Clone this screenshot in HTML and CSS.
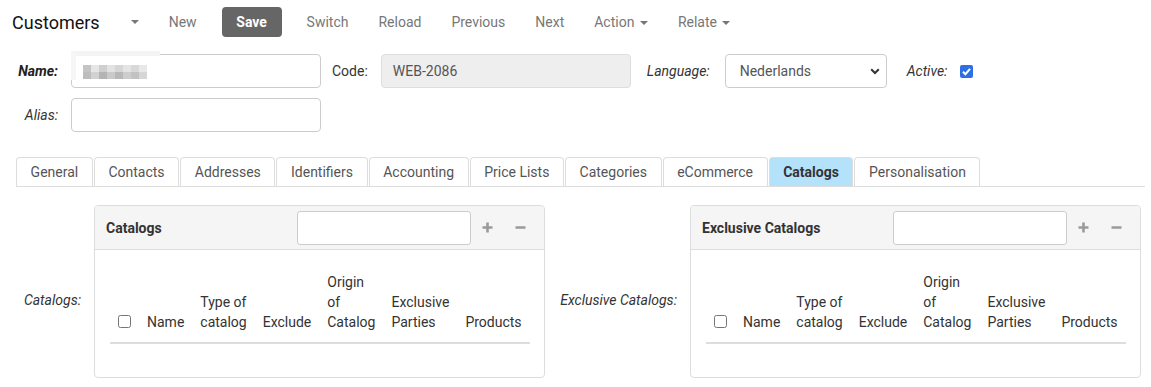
FILE: index.html
```html
<!DOCTYPE html>
<html>
<head>
<meta charset="utf-8">
<link rel="stylesheet" href="styles.css">
</head>
<body>
<div class="toolbar">
  <span class="brand">Customers</span>
  <span class="brand-toggle"><span class="caret"></span></span>
  <span class="nav-link">New</span>
  <span class="save">Save</span>
  <span class="nav-link">Switch</span>
  <span class="nav-link">Reload</span>
  <span class="nav-link">Previous</span>
  <span class="nav-link">Next</span>
  <span class="nav-link">Action <span class="caret"></span></span>
  <span class="nav-link">Relate <span class="caret"></span></span>
</div>

<div class="form">
  <div class="row">
    <label class="lbl lbl-first lbl-bold">Name:</label>
    <div class="name-wrap">
      <div class="input name-input">
        <span class="blur">
          <i class="b1"></i><i class="b2"></i><i class="b3"></i><i class="b4"></i><i class="b5"></i><i class="b6"></i><i class="b7"></i><i class="b8"></i>
        </span>
      </div>
    </div>
    <label class="lbl lbl-code">Code:</label>
    <div class="input code-input">WEB-2086</div>
    <label class="lbl lbl-lang lbl-it">Language:</label>
    <div class="select">
      <span>Nederlands</span>
      <svg class="chev" width="10" height="7" viewBox="0 0 10 7"><path d="M1.2 1.2 L5 5 L8.8 1.2" fill="none" stroke="#333" stroke-width="2"/></svg>
    </div>
    <label class="lbl lbl-active lbl-it">Active:</label>
    <svg class="check" width="13" height="13" viewBox="0 0 13 13"><rect x="0" y="0" width="13" height="13" rx="2" fill="#2f6fe6"/><path d="M3 6.8 L5.4 9.2 L10 3.8" fill="none" stroke="#fff" stroke-width="2"/></svg>
  </div>
  <div class="row">
    <label class="lbl lbl-first lbl-it">Alias:</label>
    <div class="input name-input"></div>
  </div>
</div>

<div class="tabs">
  <span class="tab">General</span>
  <span class="tab">Contacts</span>
  <span class="tab">Addresses</span>
  <span class="tab">Identifiers</span>
  <span class="tab">Accounting</span>
  <span class="tab">Price Lists</span>
  <span class="tab">Categories</span>
  <span class="tab">eCommerce</span>
  <span class="tab active">Catalogs</span>
  <span class="tab">Personalisation</span>
</div>

<div class="panels">
  <div class="pgroup">
    <label class="plabel plabel-1">Catalogs:</label>
    <div class="panel">
      <div class="phead">
        <span class="ptitle">Catalogs</span>
        <div class="psearch"></div>
        <span class="pbtn"><svg width="11" height="11" viewBox="0 0 11 11"><path d="M5.5 0.5 V10.5 M0.5 5.5 H10.5" stroke="#9a9a9a" stroke-width="2.6"/></svg></span>
        <span class="pbtn"><svg width="11" height="11" viewBox="0 0 11 11"><path d="M0.5 5.5 H10.5" stroke="#9a9a9a" stroke-width="2.6"/></svg></span>
      </div>
      <div class="pbody">
        <table class="grid">
          <thead>
            <tr>
              <th><input type="checkbox"></th>
              <th>Name</th>
              <th>Type of<br>catalog</th>
              <th>Exclude</th>
              <th>Origin<br>of<br>Catalog</th>
              <th>Exclusive<br>Parties</th>
              <th>Products</th>
            </tr>
          </thead>
        </table>
      </div>
    </div>
  </div>
  <div class="pgroup pgroup-2">
    <label class="plabel plabel-2">Exclusive Catalogs:</label>
    <div class="panel">
      <div class="phead">
        <span class="ptitle">Exclusive Catalogs</span>
        <div class="psearch"></div>
        <span class="pbtn"><svg width="11" height="11" viewBox="0 0 11 11"><path d="M5.5 0.5 V10.5 M0.5 5.5 H10.5" stroke="#9a9a9a" stroke-width="2.6"/></svg></span>
        <span class="pbtn"><svg width="11" height="11" viewBox="0 0 11 11"><path d="M0.5 5.5 H10.5" stroke="#9a9a9a" stroke-width="2.6"/></svg></span>
      </div>
      <div class="pbody">
        <table class="grid">
          <thead>
            <tr>
              <th><input type="checkbox"></th>
              <th>Name</th>
              <th>Type of<br>catalog</th>
              <th>Exclude</th>
              <th>Origin<br>of<br>Catalog</th>
              <th>Exclusive<br>Parties</th>
              <th>Products</th>
            </tr>
          </thead>
        </table>
      </div>
    </div>
  </div>
</div>
</body>
</html>
```

FILE: styles.css
```css
* { box-sizing: border-box; }
body {
  margin: 0;
  font-family: Roboto, "Liberation Sans", Arial, sans-serif;
  font-size: 14px;
  color: #333;
  background: #fff;
}

/* toolbar */
.toolbar {
  display: flex;
  align-items: center;
  height: 44px;
  padding-left: 12px;
}
.brand { font-size: 18px; color: #111; }
.brand-toggle { margin-left: 16px; padding: 0 15px; display: flex; align-items: center; }
.caret {
  display: inline-block;
  width: 0; height: 0;
  border-top: 4px solid #777;
  border-left: 4px solid transparent;
  border-right: 4px solid transparent;
  vertical-align: middle;
  margin-left: 2px;
}
.brand-toggle .caret { margin-left: 0; }
.nav-link { padding: 0 15px; color: #777; }
.save {
  margin: 0 10px;
  width: 60px;
  height: 30px;
  line-height: 30px;
  text-align: center;
  background: #666;
  color: #fff;
  font-weight: 700;
  border-radius: 4px;
}

/* form */
.form { margin-top: 10px; }
.row {
  display: flex;
  align-items: center;
  height: 34px;
  margin-bottom: 10px;
}
.lbl { color: #333; }
.lbl-it { font-style: italic; }
.lbl-bold { font-style: italic; font-weight: 700; color: #222; }
.lbl-first { width: 58px; text-align: right; margin-right: 13px; }
.lbl-code { margin-left: 11px; margin-right: 13px; }
.lbl-lang { margin-left: 16px; margin-right: 15px; }
.lbl-active { margin-left: 20px; margin-right: 13px; }
.input {
  height: 34px;
  border: 1px solid #ccc;
  border-radius: 4px;
  display: flex;
  align-items: center;
  padding: 0 11px;
  color: #555;
}
.name-wrap { position: relative; }
.name-wrap::before {
  content: "";
  position: absolute;
  left: 0; top: -3px;
  width: 89px; height: 5px;
  background: #f4f4f4;
}
.name-wrap::after {
  content: "";
  position: absolute;
  left: 0; top: -3px;
  width: 5px; height: 29px;
  background: #f6f6f6;
}
.name-input { width: 250px; }
.code-input { width: 250px; background: #eee; border-color: #ddd; }
.blur { display: flex; margin-left: 0; margin-top: 1px; }
.blur i { display: block; width: 8px; height: 14px; }
.b1 { background: linear-gradient(#c4c4c4 50%, #bdbdbd 50%); }
.b2 { background: linear-gradient(#e6e6e6 50%, #d2d2d2 50%); }
.b3 { background: linear-gradient(#cfcfcf 50%, #b4b4b4 50%); }
.b4 { background: linear-gradient(#e2e2e2 50%, #cacaca 50%); }
.b5 { background: linear-gradient(#d6d6d6 50%, #b8b8b8 50%); }
.b6 { background: linear-gradient(#e4e4e4 50%, #cdcdcd 50%); }
.b7 { background: linear-gradient(#d8d8d8 50%, #c2c2c2 50%); }
.b8 { background: linear-gradient(#e8e8e8 50%, #d6d6d6 50%); }
.select {
  width: 162px;
  height: 34px;
  border: 1px solid #ccc;
  border-radius: 4px;
  display: flex;
  align-items: center;
  justify-content: space-between;
  padding: 0 6px 0 14px;
  color: #555;
}
.chev { display: block; }
.check { display: block; }

/* tabs */
.tabs {
  display: flex;
  margin: 25px 6px 0 16px;
  border-bottom: 1px solid #ddd;
}
.tab {
  height: 29px;
  line-height: 28px;
  padding: 0 13.6px;
  border: 1px solid #ddd;
  border-bottom: none;
  border-radius: 4px 4px 0 0;
  margin-right: 1px;
  color: #555;
}
.tab.active {
  background: #b5e2fb;
  color: #333;
  font-weight: 700;
}

/* panels */
.panels {
  display: flex;
  margin-top: 18px;
}
.pgroup { display: flex; align-items: center; }
.pgroup-2 { margin-left: 11px; }
.plabel {
  font-style: italic;
  text-align: right;
  margin-right: 13px;
  padding-top: 16px;
}
.plabel-1 { width: 81px; }
.plabel-2 { width: 121px; }
.panel {
  width: 451px;
  height: 173px;
  border: 1px solid #ddd;
  border-radius: 4px;
  overflow: hidden;
}
.phead {
  height: 44px;
  background: #f5f5f5;
  border-bottom: 1px solid #ddd;
  display: flex;
  align-items: center;
  padding: 0 7px 0 11px;
}
.ptitle { flex: 1; font-weight: 700; color: #333; }
.psearch {
  width: 174px;
  height: 34px;
  background: #fff;
  border: 1px solid #ccc;
  border-radius: 3px;
}
.pbtn {
  width: 33px;
  display: flex;
  justify-content: center;
  align-items: center;
}
.pbtn svg { display: block; }
.pbody { padding: 14px 15px 0 15px; }
.grid { border-collapse: collapse; }
.grid th {
  font-weight: 400;
  text-align: left;
  vertical-align: bottom;
  line-height: 20px;
  padding: 8px 8px 10px 8px;
  border-bottom: 2px solid #ddd;
  white-space: nowrap;
  color: #333;
}
.grid input[type=checkbox] {
  margin: 0 0 4px 0;
  width: 13px;
  height: 13px;
  display: block;
}
```
